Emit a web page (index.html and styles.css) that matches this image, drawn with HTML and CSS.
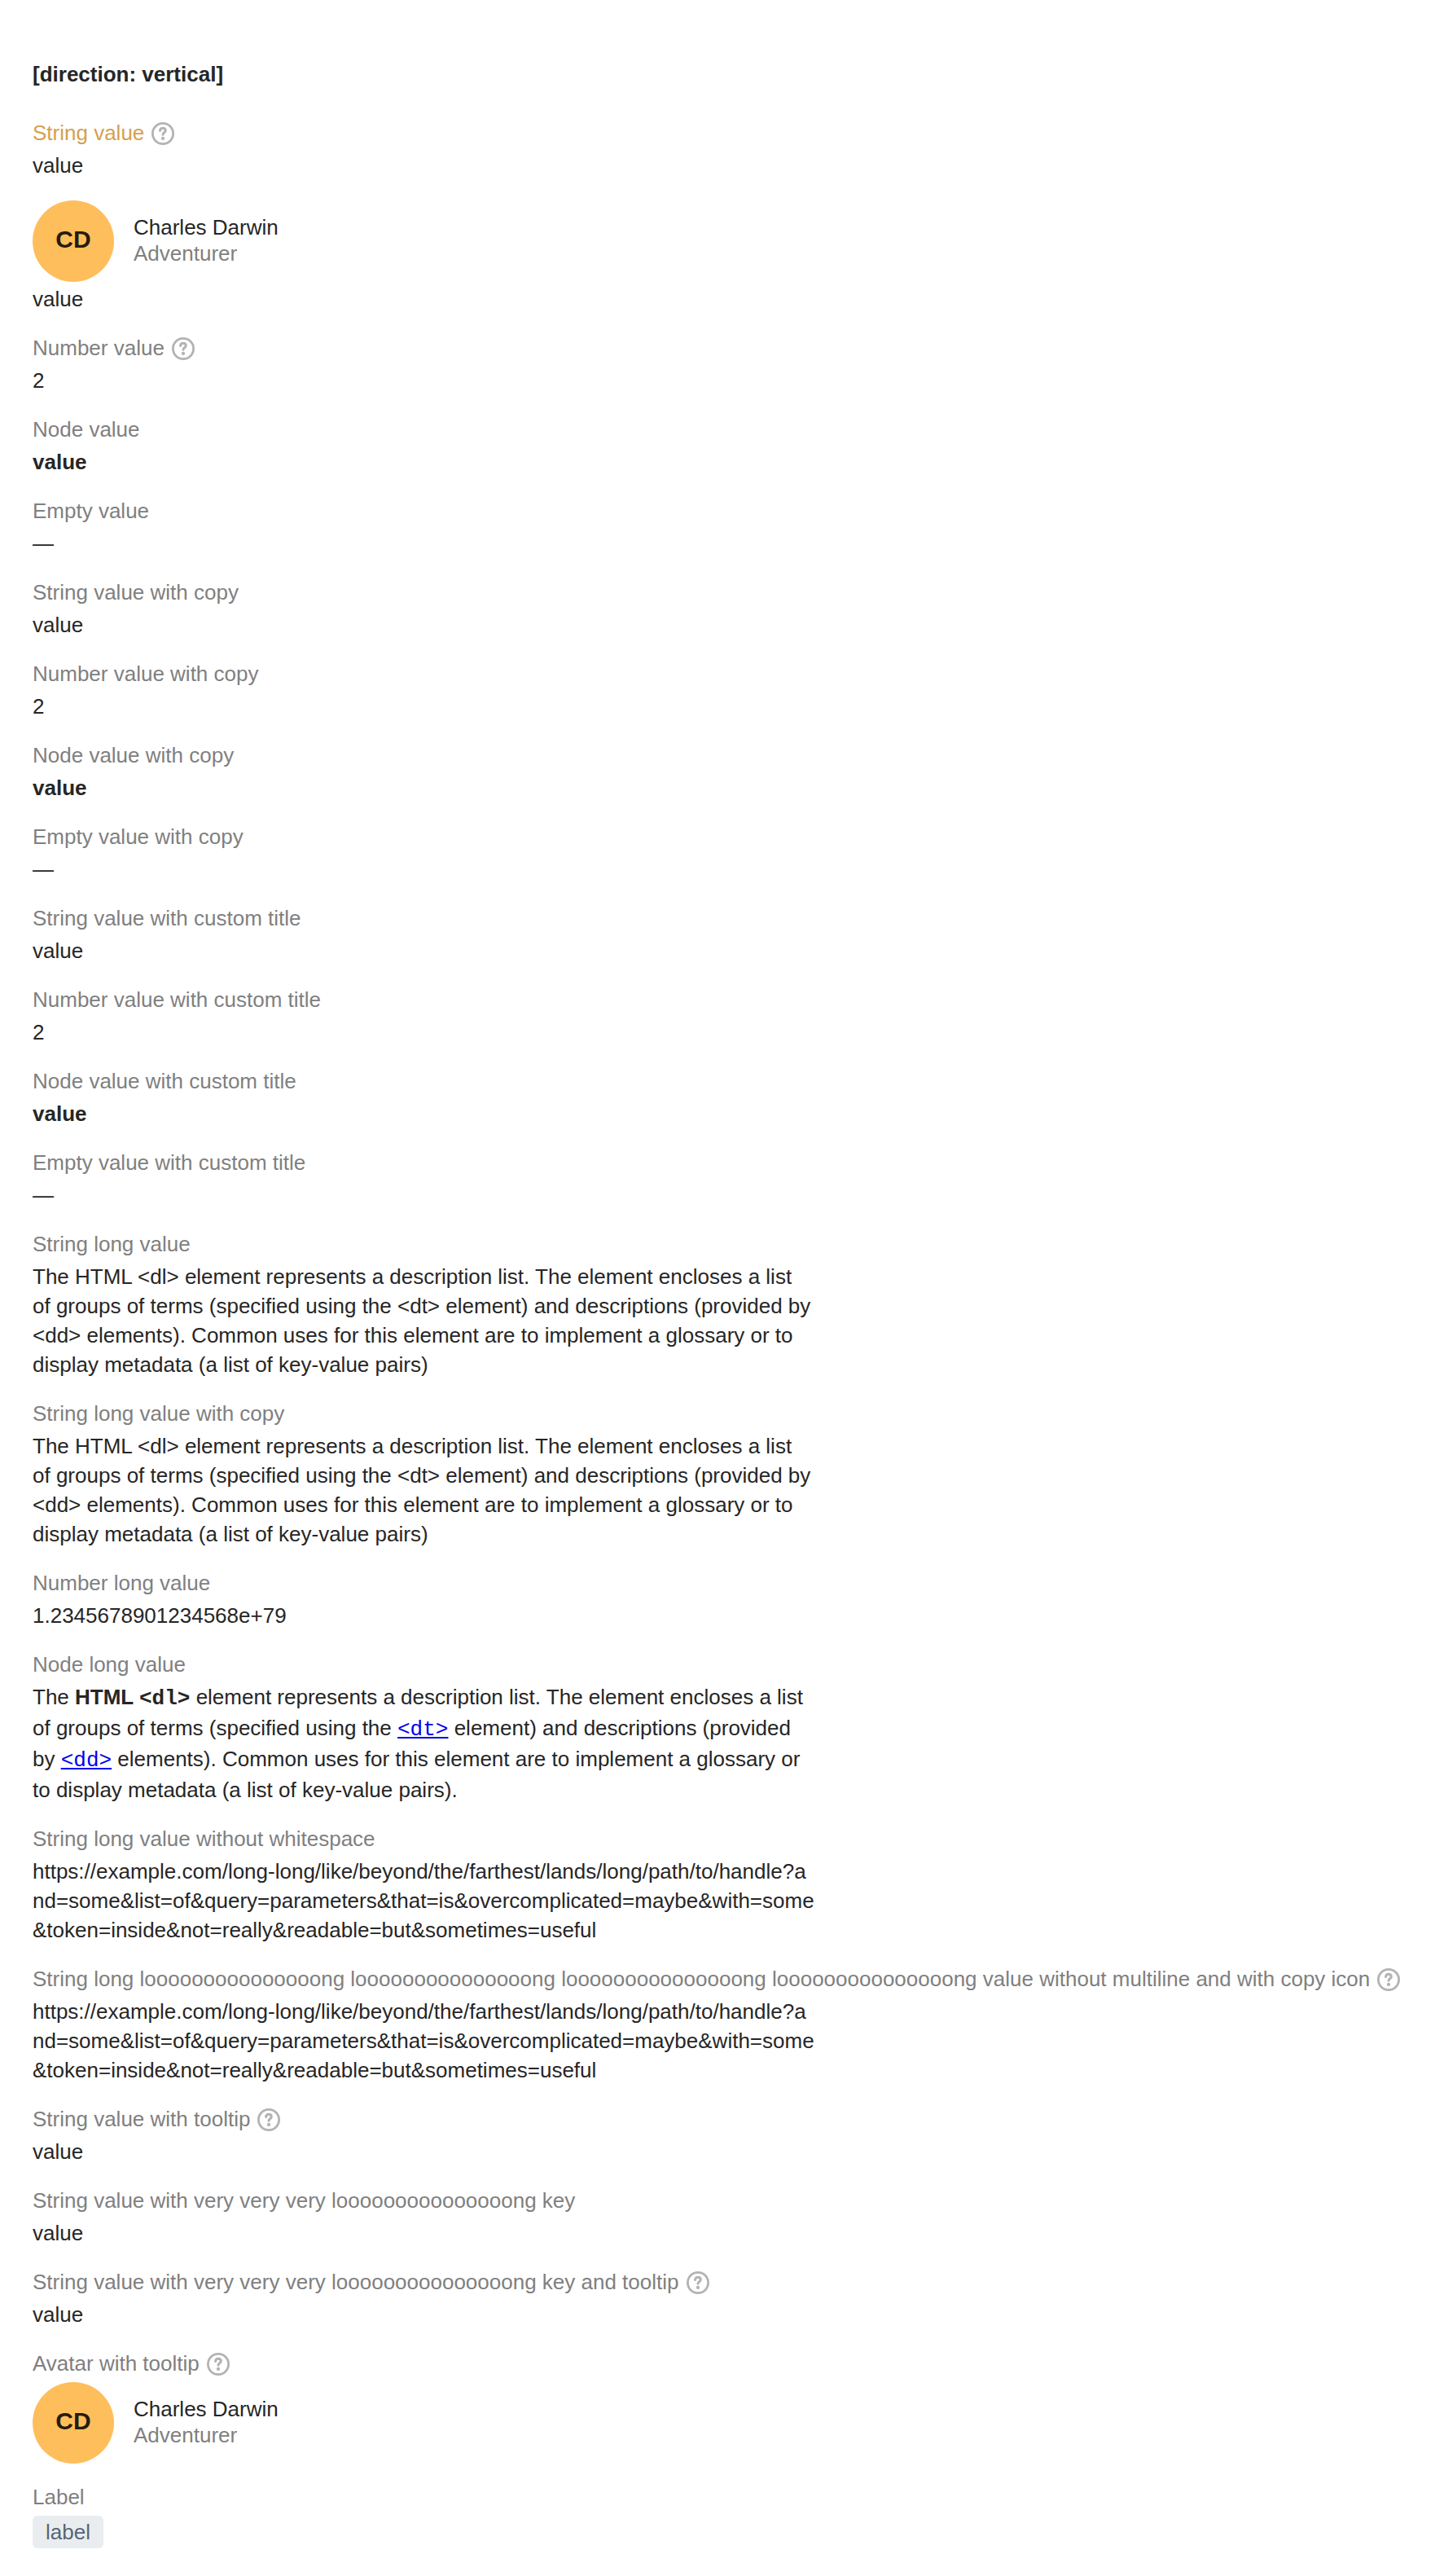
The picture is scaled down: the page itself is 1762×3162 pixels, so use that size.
FILE: index.html
```html
<!DOCTYPE html>
<html lang="en">
<head>
<meta charset="utf-8">
<title>Description list</title>
<link rel="stylesheet" href="styles.css">
</head>
<body>
<svg width="0" height="0" class="sprite" aria-hidden="true">
<symbol id="help" viewBox="0 0 28 28"><circle cx="14" cy="14" r="12.6" fill="none" stroke="currentColor" stroke-width="2.8"/><path d="M10.5 10.5C10.7 8.5 12.1 7.2 14 7.2C16 7.2 17.3 8.5 17.3 10.2C17.3 12.6 14 12.9 14 15.2" fill="none" stroke="currentColor" stroke-width="3" stroke-linecap="round"/><circle cx="14" cy="19.9" r="2.15" fill="currentColor"/></symbol>
</svg>
<main class="page">
<h1 class="title">[direction: vertical]</h1>
<dl class="list">
<div class="row"><dt class="key key-warning">String value<svg class="help"><use href="#help"/></svg></dt><dd>value</dd></div>
<div class="row"><dd class="combo"><div class="user"><span class="avatar">CD</span><div><div>Charles Darwin</div><div class="role">Adventurer</div></div></div><div>value</div></dd></div>
<div class="row"><dt class="key">Number value<svg class="help"><use href="#help"/></svg></dt><dd>2</dd></div>
<div class="row"><dt class="key">Node value</dt><dd><b>value</b></dd></div>
<div class="row"><dt class="key">Empty value</dt><dd>—</dd></div>
<div class="row"><dt class="key">String value with copy</dt><dd>value</dd></div>
<div class="row"><dt class="key">Number value with copy</dt><dd>2</dd></div>
<div class="row"><dt class="key">Node value with copy</dt><dd><b>value</b></dd></div>
<div class="row"><dt class="key">Empty value with copy</dt><dd>—</dd></div>
<div class="row"><dt class="key">String value with custom title</dt><dd>value</dd></div>
<div class="row"><dt class="key">Number value with custom title</dt><dd>2</dd></div>
<div class="row"><dt class="key">Node value with custom title</dt><dd><b>value</b></dd></div>
<div class="row"><dt class="key">Empty value with custom title</dt><dd>—</dd></div>
<div class="row"><dt class="key">String long value</dt><dd>The HTML &lt;dl&gt; element represents a description list. The element encloses a list of groups of terms (specified using the &lt;dt&gt; element) and descriptions (provided by &lt;dd&gt; elements). Common uses for this element are to implement a glossary or to display metadata (a list of key-value pairs)</dd></div>
<div class="row"><dt class="key">String long value with copy</dt><dd>The HTML &lt;dl&gt; element represents a description list. The element encloses a list of groups of terms (specified using the &lt;dt&gt; element) and descriptions (provided by &lt;dd&gt; elements). Common uses for this element are to implement a glossary or to display metadata (a list of key-value pairs)</dd></div>
<div class="row"><dt class="key">Number long value</dt><dd>1.2345678901234568e+79</dd></div>
<div class="row"><dt class="key">Node long value</dt><dd>The <b>HTML <code>&lt;dl&gt;</code></b> element represents a description list. The element encloses a list of groups of terms (specified using the <a href="#dt"><code>&lt;dt&gt;</code></a> element) and descriptions (provided by <a href="#dd"><code>&lt;dd&gt;</code></a> elements). Common uses for this element are to implement a glossary or to display metadata (a list of key-value pairs).</dd></div>
<div class="row"><dt class="key">String long value without whitespace</dt><dd class="url">https://example.com/long-long/like/beyond/the/farthest/lands/long/path/to/handle?and=some&amp;list=of&amp;query=parameters&amp;that=is&amp;overcomplicated=maybe&amp;with=some&amp;token=inside&amp;not=really&amp;readable=but&amp;sometimes=useful</dd></div>
<div class="row"><dt class="key">String long looooooooooooooong looooooooooooooong looooooooooooooong looooooooooooooong value without multiline and with copy icon<svg class="help"><use href="#help"/></svg></dt><dd class="url">https://example.com/long-long/like/beyond/the/farthest/lands/long/path/to/handle?and=some&amp;list=of&amp;query=parameters&amp;that=is&amp;overcomplicated=maybe&amp;with=some&amp;token=inside&amp;not=really&amp;readable=but&amp;sometimes=useful</dd></div>
<div class="row"><dt class="key">String value with tooltip<svg class="help"><use href="#help"/></svg></dt><dd>value</dd></div>
<div class="row"><dt class="key">String value with very very very looooooooooooooong key</dt><dd>value</dd></div>
<div class="row"><dt class="key">String value with very very very looooooooooooooong key and tooltip<svg class="help"><use href="#help"/></svg></dt><dd>value</dd></div>
<div class="row"><dt class="key">Avatar with tooltip<svg class="help"><use href="#help"/></svg></dt><dd><div class="user"><span class="avatar">CD</span><div><div>Charles Darwin</div><div class="role">Adventurer</div></div></div></dd></div>
<div class="row"><dt class="key">Label</dt><dd><span class="label">label</span></dd></div>
</dl>
</main>
</body>
</html>
```
FILE: styles.css
```css
body {
  margin: 0;
  background: #fff;
  color: #262626;
  font: 26px/36px "Liberation Sans", Arial, sans-serif;
}

.sprite {
  display: block;
}

.page {
  padding: 73px 40px 0;
}

.title {
  margin: 0 0 36px;
  font-size: 26px;
  font-weight: 700;
}

.list {
  display: flex;
  flex-direction: column;
  gap: 24px;
  margin: 0;
}

.row {
  display: flex;
  flex-direction: column;
  gap: 4px;
}

.key {
  display: flex;
  align-items: center;
  color: #808080;
  white-space: nowrap;
}

.key-warning {
  color: #d6a04d;
}

.help {
  width: 28px;
  height: 28px;
  margin: 2px 0 0 9px;
  color: #b3b3b3;
}

dd {
  max-width: 960px;
  margin: 0;
}

.url {
  word-break: break-all;
}

code {
  font: 26px "Liberation Mono", monospace;
  font-weight: inherit;
  line-height: inherit;
}

a {
  color: #00e;
}

.combo {
  display: flex;
  flex-direction: column;
  gap: 4px;
}

.user {
  display: flex;
  align-items: center;
  gap: 24px;
  height: 100px;
  line-height: 32px;
}

.avatar {
  box-sizing: border-box;
  width: 100px;
  height: 100px;
  margin: 1px 0 -1px;
  padding-bottom: 4px;
  border-radius: 50%;
  background: #ffbe5c;
  color: #261c0e;
  font-size: 30px;
  font-weight: 700;
  line-height: 96px;
  text-align: center;
}

.role {
  color: #808080;
}

.label {
  display: block;
  width: max-content;
  margin-top: 1px;
  padding: 0 16px;
  border-radius: 6px;
  background: #e9edf0;
  color: #556679;
  line-height: 40px;
}
```
